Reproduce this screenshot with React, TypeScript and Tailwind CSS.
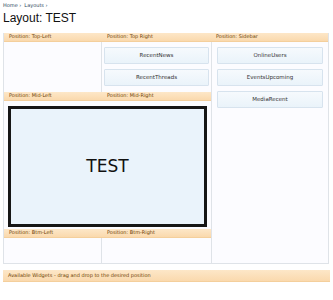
import React from 'react';

const head = 'flex items-center bg-gradient-to-b from-[#fde7c8] to-[#fad9ad] border-b border-[#f4cf9c] px-[5px] text-[5px] text-[#6d3f03]';
const btn = 'flex h-[17px] items-center justify-center rounded-[1px] border border-[#d7e3ee] bg-gradient-to-b from-[#f6fafd] to-[#eaf3fa] text-[5.5px] text-[#333]';

export default function App() {
  return (
    <div className="h-[300px] w-[333px] bg-white px-[3px] pt-[2px] font-['DejaVu_Sans',sans-serif]">
      <div className="flex h-[7px] items-center gap-[3px] text-[5px] text-[#2b485c]">
        <span>Home ›</span>
        <span>Layouts ›</span>
      </div>
      <h1 className="mt-[1px] h-[16px] font-['Liberation_Sans',sans-serif] text-[12px] leading-[16px] text-[#111]">Layout: TEST</h1>

      <div className="mt-[7px] grid w-[326px] grid-cols-[98px_109px_1fr] grid-rows-[9px_50px_9px_128px_9px_25px] border-b border-l border-r border-[#dfe3e8] bg-[#fcfcff]">
        <div className={`${head} col-start-1 row-start-1`}>Position: Top-Left</div>
        <div className={`${head} col-start-2 row-start-1`}>Position: Top Right</div>
        <div className={`${head} col-start-3 row-start-1`}>Position: Sidebar</div>

        <div className="col-start-1 row-start-2 border-r border-[#dfe3e8]" />
        <div className="col-start-2 row-start-2 flex flex-col gap-[5px] px-[2px] pt-[5px]">
          <div className={btn}>RecentNews</div>
          <div className={btn}>RecentThreads</div>
        </div>

        <div className="col-start-3 row-span-5 row-start-2 flex flex-col gap-[5px] border-l border-[#dfe3e8] px-[5px] pt-[5px]">
          <div className={btn}>OnlineUsers</div>
          <div className={btn}>EventsUpcoming</div>
          <div className={btn}>MediaRecent</div>
        </div>

        <div className={`${head} col-start-1 row-start-3`}>Position: Mid-Left</div>
        <div className={`${head} col-start-2 row-start-3`}>Position: Mid-Right</div>

        <div className="col-span-2 col-start-1 row-start-4 px-[4px] pb-[2px] pt-[5px]">
          <div className="flex h-full w-[199px] items-center justify-center border-[3px] border-[#161616] bg-[#eaf3fb] text-[17px] text-[#111]">
            TEST
          </div>
        </div>

        <div className={`${head} col-start-1 row-start-5`}>Position: Btm-Left</div>
        <div className={`${head} col-start-2 row-start-5`}>Position: Btm-Right</div>

        <div className="col-start-1 row-start-6 border-r border-[#dfe3e8]" />
        <div className="col-start-2 row-start-6" />
      </div>

      <div className={`${head} mt-[6px] h-[12px] w-[327px]`}>Available Widgets - drag and drop to the desired position</div>
    </div>
  );
}
